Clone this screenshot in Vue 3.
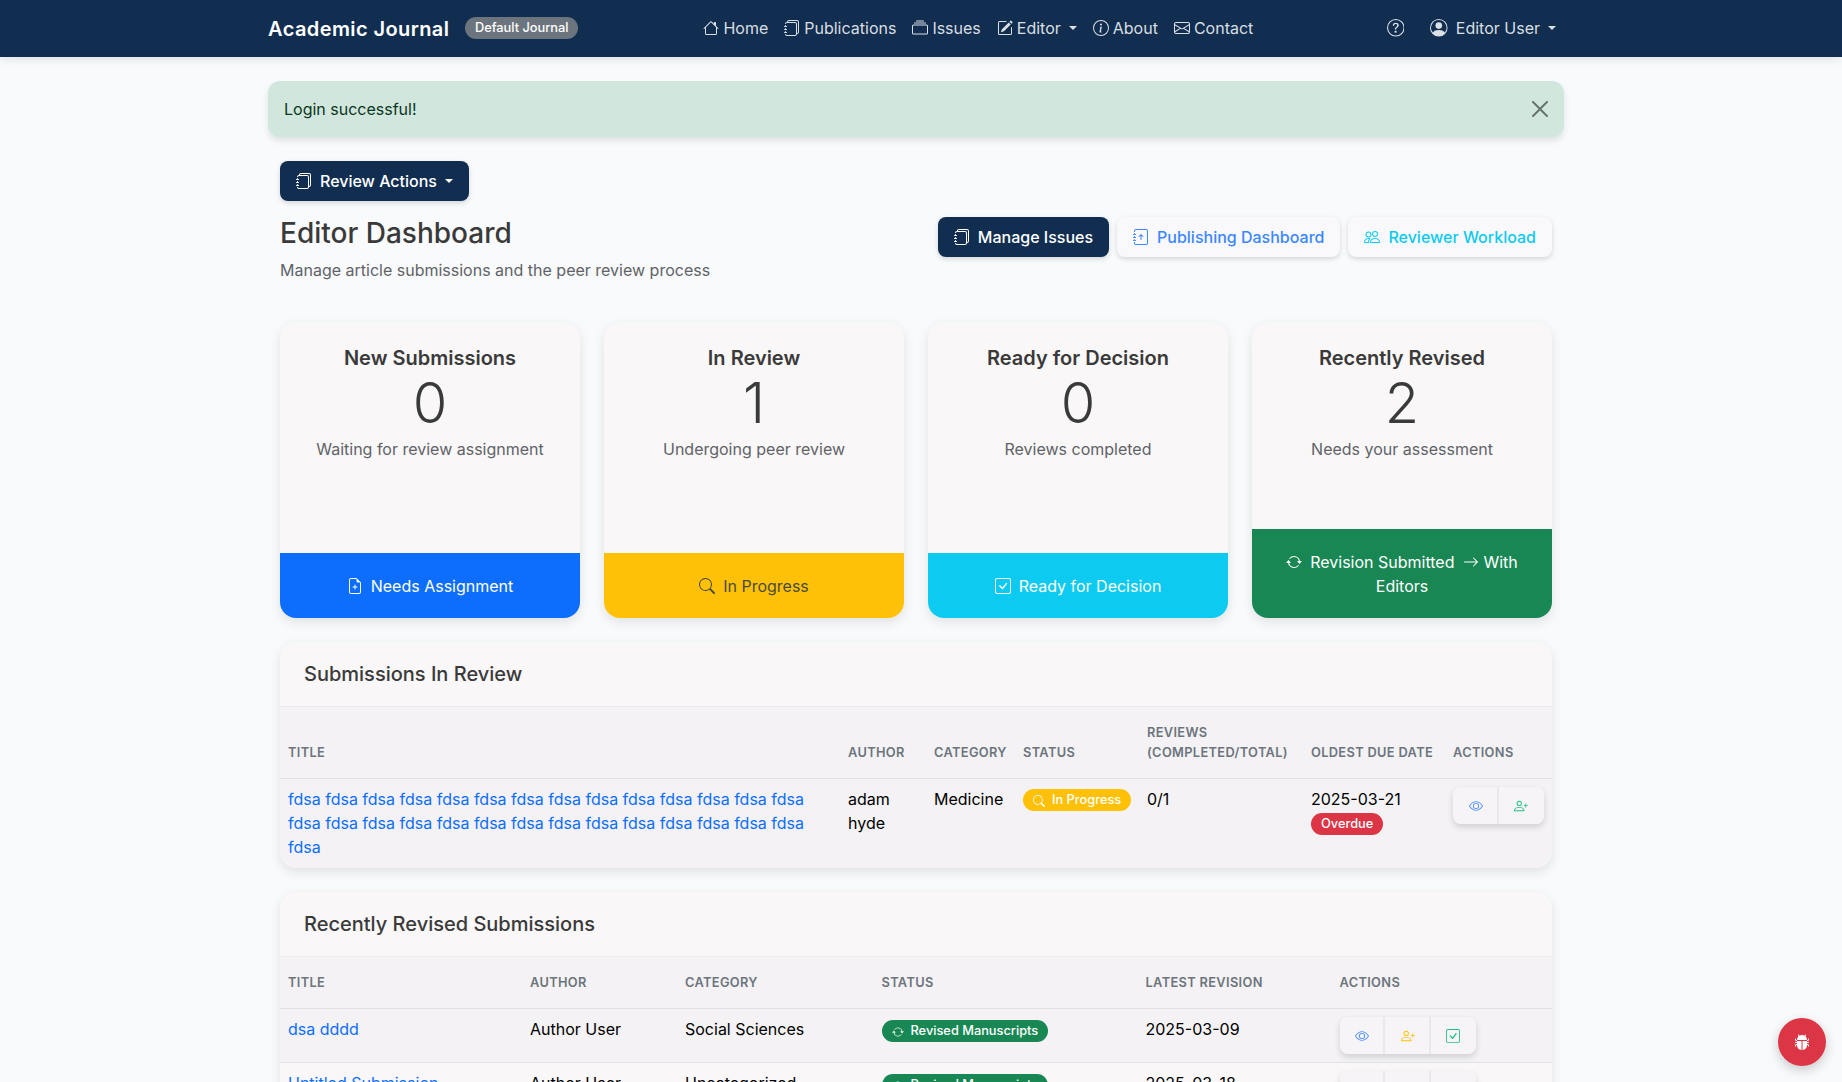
<script setup>
import { h } from "vue";

const paths = {
  house: ["M8.707 1.5a1 1 0 0 0-1.414 0L.646 8.146a.5.5 0 0 0 .708.708L2 8.207V13.5A1.5 1.5 0 0 0 3.5 15h9a1.5 1.5 0 0 0 1.5-1.5V8.207l.646.647a.5.5 0 0 0 .708-.708L13 5.793V2.5a.5.5 0 0 0-.5-.5h-1a.5.5 0 0 0-.5.5v1.293zM13 7.207V13.5a.5.5 0 0 1-.5.5h-9a.5.5 0 0 1-.5-.5V7.207l5-5z"],
  journals: ["M5 0h8a2 2 0 0 1 2 2v10a2 2 0 0 1-2 2 2 2 0 0 1-2 2H3a2 2 0 0 1-2-2h1a1 1 0 0 0 1 1h8a1 1 0 0 0 1-1V4a1 1 0 0 0-1-1H3a1 1 0 0 0-1 1H1a2 2 0 0 1 2-2h8a2 2 0 0 1 2 2v9a1 1 0 0 0 1-1V2a1 1 0 0 0-1-1H5a1 1 0 0 0-1 1H3a2 2 0 0 1 2-2", "M1 6v-.5a.5.5 0 0 1 1 0V6h.5a.5.5 0 0 1 0 1h-2a.5.5 0 0 1 0-1zm0 3v-.5a.5.5 0 0 1 1 0V9h.5a.5.5 0 0 1 0 1h-2a.5.5 0 0 1 0-1zm0 2.5v.5H.5a.5.5 0 0 0 0 1h2a.5.5 0 0 0 0-1H2v-.5a.5.5 0 0 0-1 0"],
  collection: ["M2.5 3.5a.5.5 0 0 1 0-1h11a.5.5 0 0 1 0 1zm2-2a.5.5 0 0 1 0-1h7a.5.5 0 0 1 0 1zM0 13a1.5 1.5 0 0 0 1.5 1.5h13A1.5 1.5 0 0 0 16 13V6a1.5 1.5 0 0 0-1.5-1.5h-13A1.5 1.5 0 0 0 0 6zm1.5.5A.5.5 0 0 1 1 13V6a.5.5 0 0 1 .5-.5h13a.5.5 0 0 1 .5.5v7a.5.5 0 0 1-.5.5z"],
  pencil: ["M15.502 1.94a.5.5 0 0 1 0 .706L14.459 3.69l-2-2L13.502.646a.5.5 0 0 1 .707 0l1.293 1.293zm-1.75 2.456-2-2L4.939 9.21a.5.5 0 0 0-.121.196l-.805 2.414a.25.25 0 0 0 .316.316l2.414-.805a.5.5 0 0 0 .196-.12l6.813-6.814z", "M1 13.5A1.5 1.5 0 0 0 2.5 15h11a1.5 1.5 0 0 0 1.5-1.5v-6a.5.5 0 0 0-1 0v6a.5.5 0 0 1-.5.5h-11a.5.5 0 0 1-.5-.5v-11a.5.5 0 0 1 .5-.5H9a.5.5 0 0 0 0-1H2.5A1.5 1.5 0 0 0 1 2.5z"],
  info: ["M8 15A7 7 0 1 1 8 1a7 7 0 0 1 0 14m0 1A8 8 0 1 0 8 0a8 8 0 0 0 0 16", "m8.93 6.588-2.29.287-.082.38.45.083c.294.07.352.176.288.469l-.738 3.468c-.194.897.105 1.319.808 1.319.545 0 1.178-.252 1.465-.598l.088-.416c-.2.176-.492.246-.686.246-.275 0-.375-.193-.304-.533zM9 4.5a1 1 0 1 1-2 0 1 1 0 0 1 2 0"],
  envelope: ["M0 4a2 2 0 0 1 2-2h12a2 2 0 0 1 2 2v8a2 2 0 0 1-2 2H2a2 2 0 0 1-2-2zm2-1a1 1 0 0 0-1 1v.217l7 4.2 7-4.2V4a1 1 0 0 0-1-1zm13 2.383-4.708 2.825L15 11.105zm-.034 6.876-5.64-3.471L8 9.583l-1.326-.795-5.64 3.47A1 1 0 0 0 2 13h12a1 1 0 0 0 .966-.741M1 11.105l4.708-2.897L1 5.383z"],
  question: ["M8 15A7 7 0 1 1 8 1a7 7 0 0 1 0 14m0 1A8 8 0 1 0 8 0a8 8 0 0 0 0 16", "M5.255 5.786a.237.237 0 0 0 .241.247h.825c.138 0 .248-.113.266-.25.09-.656.54-1.134 1.342-1.134.686 0 1.314.343 1.314 1.168 0 .635-.374.927-.965 1.371-.673.489-1.206 1.06-1.168 1.987l.003.217a.25.25 0 0 0 .25.246h.811a.25.25 0 0 0 .25-.25v-.105c0-.718.273-.927 1.01-1.486.609-.463 1.244-.977 1.244-2.056 0-1.511-1.276-2.241-2.673-2.241-1.267 0-2.655.59-2.75 2.286m1.557 5.763c0 .533.425.927 1.01.927.609 0 1.028-.394 1.028-.927 0-.552-.42-.94-1.029-.94-.584 0-1.009.388-1.009.94"],
  personCircle: ["M11 6a3 3 0 1 1-6 0 3 3 0 0 1 6 0", "M0 8a8 8 0 1 1 16 0A8 8 0 0 1 0 8m8-7a7 7 0 0 0-5.468 11.37C3.242 11.226 4.805 10 8 10s4.757 1.225 5.468 2.37A7 7 0 0 0 8 1"],
  filePlus: ["M8 6.5a.5.5 0 0 1 .5.5v1.5H10a.5.5 0 0 1 0 1H8.5V11a.5.5 0 0 1-1 0V9.5H6a.5.5 0 0 1 0-1h1.5V7a.5.5 0 0 1 .5-.5", "M14 4.5V14a2 2 0 0 1-2 2H4a2 2 0 0 1-2-2V2a2 2 0 0 1 2-2h5.5zm-3 0A1.5 1.5 0 0 1 9.5 3V1H4a1 1 0 0 0-1 1v12a1 1 0 0 0 1 1h8a1 1 0 0 0 1-1V4.5z"],
  search: ["M11.742 10.344a6.5 6.5 0 1 0-1.397 1.398h-.001q.044.06.098.115l3.85 3.85a1 1 0 0 0 1.415-1.414l-3.85-3.85a1 1 0 0 0-.115-.1zM12 6.5a5.5 5.5 0 1 1-11 0 5.5 5.5 0 0 1 11 0"],
  checkSquare: ["M14 1a1 1 0 0 1 1 1v12a1 1 0 0 1-1 1H2a1 1 0 0 1-1-1V2a1 1 0 0 1 1-1zM2 0a2 2 0 0 0-2 2v12a2 2 0 0 0 2 2h12a2 2 0 0 0 2-2V2a2 2 0 0 0-2-2z", "M10.97 4.97a.75.75 0 0 1 1.071 1.05l-3.992 4.99a.75.75 0 0 1-1.08.02L4.324 8.384a.75.75 0 1 1 1.06-1.06l2.094 2.093 3.473-4.425z"],
  repeat: ["M11.534 7h3.932a.25.25 0 0 1 .192.41l-1.966 2.36a.25.25 0 0 1-.384 0l-1.966-2.36a.25.25 0 0 1 .192-.41m-11 2h3.932a.25.25 0 0 0 .192-.41L2.692 6.23a.25.25 0 0 0-.384 0L.342 8.59A.25.25 0 0 0 .534 9", "M8 3c-1.552 0-2.94.707-3.857 1.818a.5.5 0 1 1-.771-.636A6.002 6.002 0 0 1 13.917 7H12.9A5 5 0 0 0 8 3M3.1 9a5.002 5.002 0 0 0 8.757 2.182.5.5 0 1 1 .771.636A6.002 6.002 0 0 1 2.083 9z"],
  arrowRight: ["M1 8a.5.5 0 0 1 .5-.5h11.793l-3.147-3.146a.5.5 0 0 1 .708-.708l4 4a.5.5 0 0 1 0 .708l-4 4a.5.5 0 0 1-.708-.708L13.293 8.5H1.5A.5.5 0 0 1 1 8"],
  eye: ["M16 8s-3-5.5-8-5.5S0 8 0 8s3 5.5 8 5.5S16 8 16 8M1.173 8a13 13 0 0 1 1.66-2.043C4.12 4.668 5.88 3.5 8 3.5s3.879 1.168 5.168 2.457A13 13 0 0 1 14.828 8q-.086.13-.195.288c-.335.48-.83 1.12-1.465 1.755C11.879 11.332 10.119 12.5 8 12.5s-3.879-1.168-5.168-2.457A13 13 0 0 1 1.172 8z", "M8 5.5a2.5 2.5 0 1 0 0 5 2.5 2.5 0 0 0 0-5M4.5 8a3.5 3.5 0 1 1 7 0 3.5 3.5 0 0 1-7 0"],
  personPlus: ["M6 8a3 3 0 1 0 0-6 3 3 0 0 0 0 6m2-3a2 2 0 1 1-4 0 2 2 0 0 1 4 0m4 8c0 1-1 1-1 1H1s-1 0-1-1 1-4 6-4 6 3 6 4m-1-.004c-.001-.246-.154-.986-.832-1.664C9.516 10.68 8.289 10 6 10s-3.516.68-4.168 1.332c-.678.678-.83 1.418-.832 1.664z", "M13.5 5a.5.5 0 0 1 .5.5V7h1.5a.5.5 0 0 1 0 1H14v1.5a.5.5 0 0 1-1 0V8h-1.5a.5.5 0 0 1 0-1H13V5.5a.5.5 0 0 1 .5-.5"],
  journalUp: ["M8 11a.5.5 0 0 0 .5-.5V6.707l1.146 1.147a.5.5 0 0 0 .708-.708l-2-2a.5.5 0 0 0-.708 0l-2 2a.5.5 0 1 0 .708.708L7.5 6.707V10.5a.5.5 0 0 0 .5.5", "M3 0h10a2 2 0 0 1 2 2v12a2 2 0 0 1-2 2H3a2 2 0 0 1-2-2v-1h1v1a1 1 0 0 0 1 1h10a1 1 0 0 0 1-1V2a1 1 0 0 0-1-1H3a1 1 0 0 0-1 1v1H1V2a2 2 0 0 1 2-2", "M1 5v-.5a.5.5 0 0 1 1 0V5h.5a.5.5 0 0 1 0 1h-2a.5.5 0 0 1 0-1zm0 3v-.5a.5.5 0 0 1 1 0V8h.5a.5.5 0 0 1 0 1h-2a.5.5 0 0 1 0-1zm0 3v-.5a.5.5 0 0 1 1 0v.5h.5a.5.5 0 0 1 0 1h-2a.5.5 0 0 1 0-1z"],
  people: ["M15 14s1 0 1-1-1-4-5-4-5 3-5 4 1 1 1 1zm-7.978-1L7 12.996c.001-.264.167-1.03.76-1.72C8.312 10.629 9.282 10 11 10c1.717 0 2.687.63 3.24 1.276.593.69.758 1.457.76 1.72l-.008.002-.014.002zM11 7a2 2 0 1 0 0-4 2 2 0 0 0 0 4m3-2a3 3 0 1 1-6 0 3 3 0 0 1 6 0M6.936 9.28a6 6 0 0 0-1.23-.247A7 7 0 0 0 5 9c-4 0-5 3-5 4q0 1 1 1h4.216A2.24 2.24 0 0 1 5 13c0-1.01.377-2.042 1.09-2.904.243-.294.526-.569.846-.816M4.92 10A5.5 5.5 0 0 0 4 13H1c0-.26.164-1.03.76-1.724.545-.636 1.492-1.256 3.16-1.275ZM1.5 5.5a3 3 0 1 1 6 0 3 3 0 0 1-6 0m3-2a2 2 0 1 0 0 4 2 2 0 0 0 0-4"],
  bug: ["M4.978.855a.5.5 0 1 0-.956.29l.41 1.352A5 5 0 0 0 3 6h10a5 5 0 0 0-1.432-3.503l.41-1.352a.5.5 0 1 0-.956-.29l-.291.956A5 5 0 0 0 8 1a5 5 0 0 0-2.731.811l-.29-.956z", "M13 6v1H8.5v8.975A5 5 0 0 0 13 11h.5a.5.5 0 0 1 .5.5v.5a.5.5 0 1 0 1 0v-.5a1.5 1.5 0 0 0-1.5-1.5H13V9h1.5a.5.5 0 0 0 0-1H13V7h.5A1.5 1.5 0 0 0 15 5.5V5a.5.5 0 0 0-1 0v.5a.5.5 0 0 1-.5.5zm-5.5 9.975V7H3V6h-.5a.5.5 0 0 1-.5-.5V5a.5.5 0 0 0-1 0v.5A1.5 1.5 0 0 0 2.5 7H3v1H1.5a.5.5 0 0 0 0 1H3v1h-.5A1.5 1.5 0 0 0 1 11.5v.5a.5.5 0 1 0 1 0v-.5a.5.5 0 0 1 .5-.5H3a5 5 0 0 0 4.5 4.975"],
};

// same 16x16 grid for every glyph, sized from css
const Icon = (props) =>
  h("svg", { class: "bi", viewBox: "0 0 16 16", fill: "currentColor" },
    paths[props.name].map((d) => h("path", { d })));
Icon.props = ["name"];

const navLinks = [
  { label: "Home", icon: "house" },
  { label: "Publications", icon: "journals" },
  { label: "Issues", icon: "collection" },
  { label: "Editor", icon: "pencil", caret: true },
  { label: "About", icon: "info" },
  { label: "Contact", icon: "envelope" },
];

const stats = [
  { title: "New Submissions", count: 0, text: "Waiting for review assignment", footer: "Needs Assignment", icon: "filePlus", tone: "blue" },
  { title: "In Review", count: 1, text: "Undergoing peer review", footer: "In Progress", icon: "search", tone: "yellow" },
  { title: "Ready for Decision", count: 0, text: "Reviews completed", footer: "Ready for Decision", icon: "checkSquare", tone: "cyan" },
];

const longTitle = Array(29).fill("fdsa").join(" ");

const revised = [
  { title: "dsa dddd", author: "Author User", category: "Social Sciences", date: "2025-03-09" },
  { title: "Untitled Submission", author: "Author User", category: "Uncategorized", date: "2025-03-18" },
];
</script>

<template>
  <div class="page">
    <nav class="navbar">
      <div class="nav-inner">
        <a class="brand">Academic Journal</a>
        <span class="journal-badge">Default Journal</span>
        <ul class="nav-links">
          <li v-for="link in navLinks" :key="link.label" class="nav-link">
            <Icon :name="link.icon" />{{ link.label }}<i v-if="link.caret" class="caret"></i>
          </li>
        </ul>
        <div class="nav-right">
          <span class="nav-link help"><Icon name="question" /></span>
          <span class="nav-link user"><Icon name="personCircle" />Editor User<i class="caret"></i></span>
        </div>
      </div>
    </nav>

    <main class="main">
      <div class="alert">
        <span>Login successful!</span>
        <svg class="alert-close" viewBox="0 0 16 16" fill="currentColor"><path d="M.293.293a1 1 0 0 1 1.414 0L8 6.586 14.293.293a1 1 0 1 1 1.414 1.414L9.414 8l6.293 6.293a1 1 0 0 1-1.414 1.414L8 9.414l-6.293 6.293a1 1 0 0 1-1.414-1.414L6.586 8 .293 1.707a1 1 0 0 1 0-1.414"/></svg>
      </div>

      <div class="content">
        <button class="btn btn-dark review-btn"><Icon name="journals" />Review Actions<i class="caret"></i></button>

        <div class="heading-row">
          <div>
            <h2>Editor Dashboard</h2>
            <p class="subtitle">Manage article submissions and the peer review process</p>
          </div>
          <div class="heading-actions">
            <button class="btn btn-dark"><Icon name="journals" />Manage Issues</button>
            <button class="btn btn-light link-blue"><Icon name="journalUp" />Publishing Dashboard</button>
            <button class="btn btn-light link-cyan"><Icon name="people" />Reviewer Workload</button>
          </div>
        </div>

        <div class="stats">
          <div v-for="s in stats" :key="s.title" class="stat-card">
            <div class="stat-body">
              <h5>{{ s.title }}</h5>
              <div class="stat-count">{{ s.count }}</div>
              <p>{{ s.text }}</p>
            </div>
            <div class="stat-footer" :class="s.tone"><Icon :name="s.icon" class="gap" />{{ s.footer }}</div>
          </div>
          <div class="stat-card">
            <div class="stat-body">
              <h5>Recently Revised</h5>
              <div class="stat-count">2</div>
              <p>Needs your assessment</p>
            </div>
            <div class="stat-footer green"><Icon name="repeat" class="gap" />Revision Submitted <Icon name="arrowRight" class="arrow" /> With Editors</div>
          </div>
        </div>

        <section class="panel">
          <div class="panel-head">Submissions In Review</div>
          <table class="review-table">
            <thead>
              <tr>
                <th>Title</th><th>Author</th><th>Category</th><th>Status</th>
                <th>Reviews<br />(Completed/Total)</th><th>Oldest Due Date</th><th>Actions</th>
              </tr>
            </thead>
            <tbody>
              <tr>
                <td><a class="title-link">{{ longTitle }}</a></td>
                <td>adam hyde</td>
                <td>Medicine</td>
                <td><span class="pill pill-yellow"><Icon name="search" />In Progress</span></td>
                <td>0/1</td>
                <td>2025-03-21<br /><span class="pill pill-red">Overdue</span></td>
                <td>
                  <div class="btn-group">
                    <button class="icon-btn c-blue"><Icon name="eye" /></button>
                    <button class="icon-btn c-green"><Icon name="personPlus" /></button>
                  </div>
                </td>
              </tr>
            </tbody>
          </table>
        </section>

        <section class="panel">
          <div class="panel-head">Recently Revised Submissions</div>
          <table class="revised-table">
            <thead>
              <tr>
                <th>Title</th><th>Author</th><th>Category</th><th>Status</th><th>Latest Revision</th><th>Actions</th>
              </tr>
            </thead>
            <tbody>
              <tr v-for="row in revised" :key="row.title">
                <td><a class="title-link">{{ row.title }}</a></td>
                <td>{{ row.author }}</td>
                <td>{{ row.category }}</td>
                <td><span class="pill pill-green"><Icon name="repeat" />Revised Manuscripts</span></td>
                <td>{{ row.date }}</td>
                <td>
                  <div class="btn-group">
                    <button class="icon-btn c-blue"><Icon name="eye" /></button>
                    <button class="icon-btn c-yellow"><Icon name="personPlus" /></button>
                    <button class="icon-btn c-green"><Icon name="checkSquare" /></button>
                  </div>
                </td>
              </tr>
            </tbody>
          </table>
        </section>
      </div>
    </main>

    <button class="debug-fab"><Icon name="bug" /></button>
  </div>
</template>

<style>
html, body {
  margin: 0;
  background: #f9fafc;
  overflow: hidden;
}
.bi {
  width: 16px;
  height: 16px;
  flex: none;
  display: inline-block;
  vertical-align: -0.125em;
}
</style>

<style scoped>
.page {
  height: 100vh;
  overflow: hidden;
  font-family: Inter, "Liberation Sans", sans-serif;
  font-size: 16px;
  line-height: 1.5;
  color: #333;
  background: #f9fafc;
}

.navbar {
  height: 57px;
  padding-right: 10px;
  background: #112e51;
  box-shadow: 0 2px 10px rgba(0, 0, 0, 0.1);
  position: relative;
}
.nav-inner {
  width: 1296px;
  height: 56px;
  margin: 0 auto;
  display: flex;
  align-items: center;
}
.brand {
  padding-top: 1px;
  font-size: 20px;
  font-weight: 600;
  letter-spacing: 0.4px;
  color: #fff;
}
.journal-badge {
  margin-left: 16px;
  padding: 0 9.6px;
  height: 22px;
  line-height: 22px;
  border-radius: 11px;
  background: #6c757d;
  color: #fff;
  font-size: 12.8px;
  font-weight: 500;
}
.nav-links {
  list-style: none;
  display: flex;
  margin: 0 auto;
  padding: 0;
}
.nav-link {
  display: flex;
  align-items: center;
  padding: 8px;
  color: rgba(255, 255, 255, 0.85);
}
.nav-link .bi {
  margin-right: 4px;
}
.nav-right {
  display: flex;
  align-items: center;
}
.help {
  margin-right: 10px;
}
.help .bi {
  width: 17.6px;
  height: 17.6px;
  margin-right: 0;
}
.user .bi {
  width: 17.6px;
  height: 17.6px;
  margin-right: 8px;
}
.caret {
  display: inline-block;
  margin-left: 8px;
  border-top: 4.8px solid;
  border-left: 4.8px solid transparent;
  border-right: 4.8px solid transparent;
}

.main {
  width: 1296px;
  margin: 0 auto;
  padding: 24px 10px 0 0;
  box-sizing: content-box;
}
.alert {
  display: flex;
  justify-content: space-between;
  align-items: center;
  box-sizing: border-box;
  height: 56px;
  padding: 16px;
  margin-bottom: 24px;
  border-radius: 12px;
  background: #d1e7dd;
  color: #0a3622;
  box-shadow: 0 4px 6px rgba(0, 0, 0, 0.1);
}
.alert-close {
  width: 16px;
  height: 16px;
  color: rgba(0, 0, 0, 0.5);
}
.content {
  padding: 0 12px;
}

.btn {
  display: inline-flex;
  align-items: center;
  height: 40px;
  box-sizing: border-box;
  padding: 8px 16px;
  border: 0;
  border-radius: 8px;
  font: inherit;
  font-weight: 500;
  box-shadow: 0 2px 5px rgba(0, 0, 0, 0.15);
}
.btn .bi {
  margin-right: 8px;
}
.btn-dark {
  background: #112e51;
  color: #fff;
}
.btn-light {
  background: #f9f9fb;
}
.link-blue {
  color: #3c87fd;
}
.link-cyan {
  color: #0dcaf0;
}
.review-btn {
  margin-bottom: 16px;
}

.heading-row {
  display: flex;
  justify-content: space-between;
  align-items: flex-start;
  margin-bottom: 40px;
}
h2 {
  margin: 0 0 8px;
  font-size: 28px;
  line-height: 33px;
  font-weight: 500;
  color: #3a3a3a;
}
.subtitle {
  margin: 0;
  color: #5f6368;
}
.heading-actions {
  display: flex;
  gap: 8px;
}

.stats {
  display: grid;
  grid-template-columns: repeat(4, 1fr);
  gap: 24px;
  margin-bottom: 24px;
}
.stat-card {
  display: flex;
  flex-direction: column;
  min-height: 296px;
  border-radius: 16px;
  overflow: hidden;
  background: #f9f7f8;
  box-shadow: 0 4px 12px rgba(0, 0, 0, 0.1);
}
.stat-body {
  flex: 1;
  padding: 24px;
  text-align: center;
}
.stat-body h5 {
  margin: 0;
  font-size: 20px;
  line-height: 24px;
  font-weight: 600;
  color: #3a3a3a;
}
.stat-count {
  font-size: 56px;
  line-height: 67px;
  font-weight: 300;
  color: #3a3a3a;
}
.stat-body p {
  margin: 0;
  color: #5f6368;
}
.stat-footer {
  padding: 20px;
  text-align: center;
  border-top: 1px solid transparent;
}
.gap {
  margin-right: 8px;
}
.arrow {
  margin-left: 4px;
}
.blue {
  background: #0d6efd;
  color: #fff;
}
.yellow {
  background: #ffc107;
  color: #4a4a3a;
}
.cyan {
  background: #0dcaf0;
  color: #fff;
}
.green {
  background: #198754;
  color: #fff;
}

.panel {
  margin-bottom: 24px;
  border-radius: 16px;
  overflow: hidden;
  background: #f9f7f8;
  box-shadow: 0 4px 12px rgba(0, 0, 0, 0.1);
}
.panel-head {
  padding: 20px 24px;
  font-size: 20px;
  line-height: 24px;
  font-weight: 500;
  color: #3a3a3a;
  border-bottom: 1px solid #ecebee;
}
table {
  width: 100%;
  table-layout: fixed;
  border-collapse: collapse;
}
th {
  padding: 16px 8px 15px;
  vertical-align: bottom;
  text-align: left;
  font-size: 12.8px;
  line-height: 20px;
  font-weight: 600;
  letter-spacing: 0.35px;
  text-transform: uppercase;
  color: #6c757d;
  background: #f4f2f4;
  border-bottom: 1px solid #dee2e6;
}
td {
  padding: 8px;
  vertical-align: top;
  color: #000;
  border-bottom: 1px solid #dee2e6;
}
.review-table th:nth-child(1) { width: 544px; }
.review-table th:nth-child(2) { width: 70px; }
.review-table th:nth-child(3) { width: 73px; }
.review-table th:nth-child(4) { width: 108px; }
.review-table th:nth-child(5) { width: 148px; }
.review-table th:nth-child(6) { width: 126px; }
.review-table td {
  padding-bottom: 9px;
  background: #f4f2f4;
  border-bottom: 0;
}
.revised-table th:nth-child(1) { width: 226px; }
.revised-table th:nth-child(2) { width: 139px; }
.revised-table th:nth-child(3) { width: 180.5px; }
.revised-table th:nth-child(4) { width: 248px; }
.revised-table th:nth-child(5) { width: 178px; }
.revised-table tbody tr:nth-child(odd) td {
  background: #f4f2f4;
}
.title-link {
  color: #0d6efd;
}

.pill {
  display: inline-flex;
  align-items: center;
  box-sizing: border-box;
  height: 22px;
  padding: 1px 10px 0;
  border-radius: 11px;
  font-size: 12.8px;
  font-weight: 500;
  line-height: 1;
  white-space: nowrap;
  color: #fff;
  vertical-align: top;
}
.pill .bi {
  width: 12px;
  height: 12px;
  margin-right: 7px;
}
.pill-yellow {
  background: #ffc107;
  margin-top: 2px;
}
.pill-red {
  background: #dc3545;
  margin-top: 2px;
}
.pill-green {
  background: #198754;
  margin-top: 3px;
}

.btn-group {
  display: inline-flex;
  border-radius: 8px;
  box-shadow: 0 3px 6px rgba(0, 0, 0, 0.15);
}
.icon-btn {
  width: 45.5px;
  height: 37px;
  padding: 0;
  display: flex;
  align-items: center;
  justify-content: center;
  border: 0;
  background: #f6f4f6;
}
.icon-btn .bi {
  width: 14px;
  height: 14px;
}
.icon-btn:not(:last-child) {
  padding-left: 2px;
  border-right: 2px solid #e9e7ea;
}
.icon-btn:first-child {
  border-radius: 8px 0 0 8px;
}
.icon-btn:last-child {
  border-radius: 0 8px 8px 0;
}
.c-blue { color: #4d8dfd; }
.c-green { color: #20bf82; }
.c-yellow { color: #ffc107; }

.debug-fab {
  position: fixed;
  right: 16px;
  bottom: 16px;
  width: 48px;
  height: 48px;
  padding: 0;
  display: flex;
  align-items: center;
  justify-content: center;
  border: 0;
  border-radius: 50%;
  background: #dc3545;
  color: #fff;
  box-shadow: 0 4px 12px rgba(0, 0, 0, 0.2);
}
</style>
